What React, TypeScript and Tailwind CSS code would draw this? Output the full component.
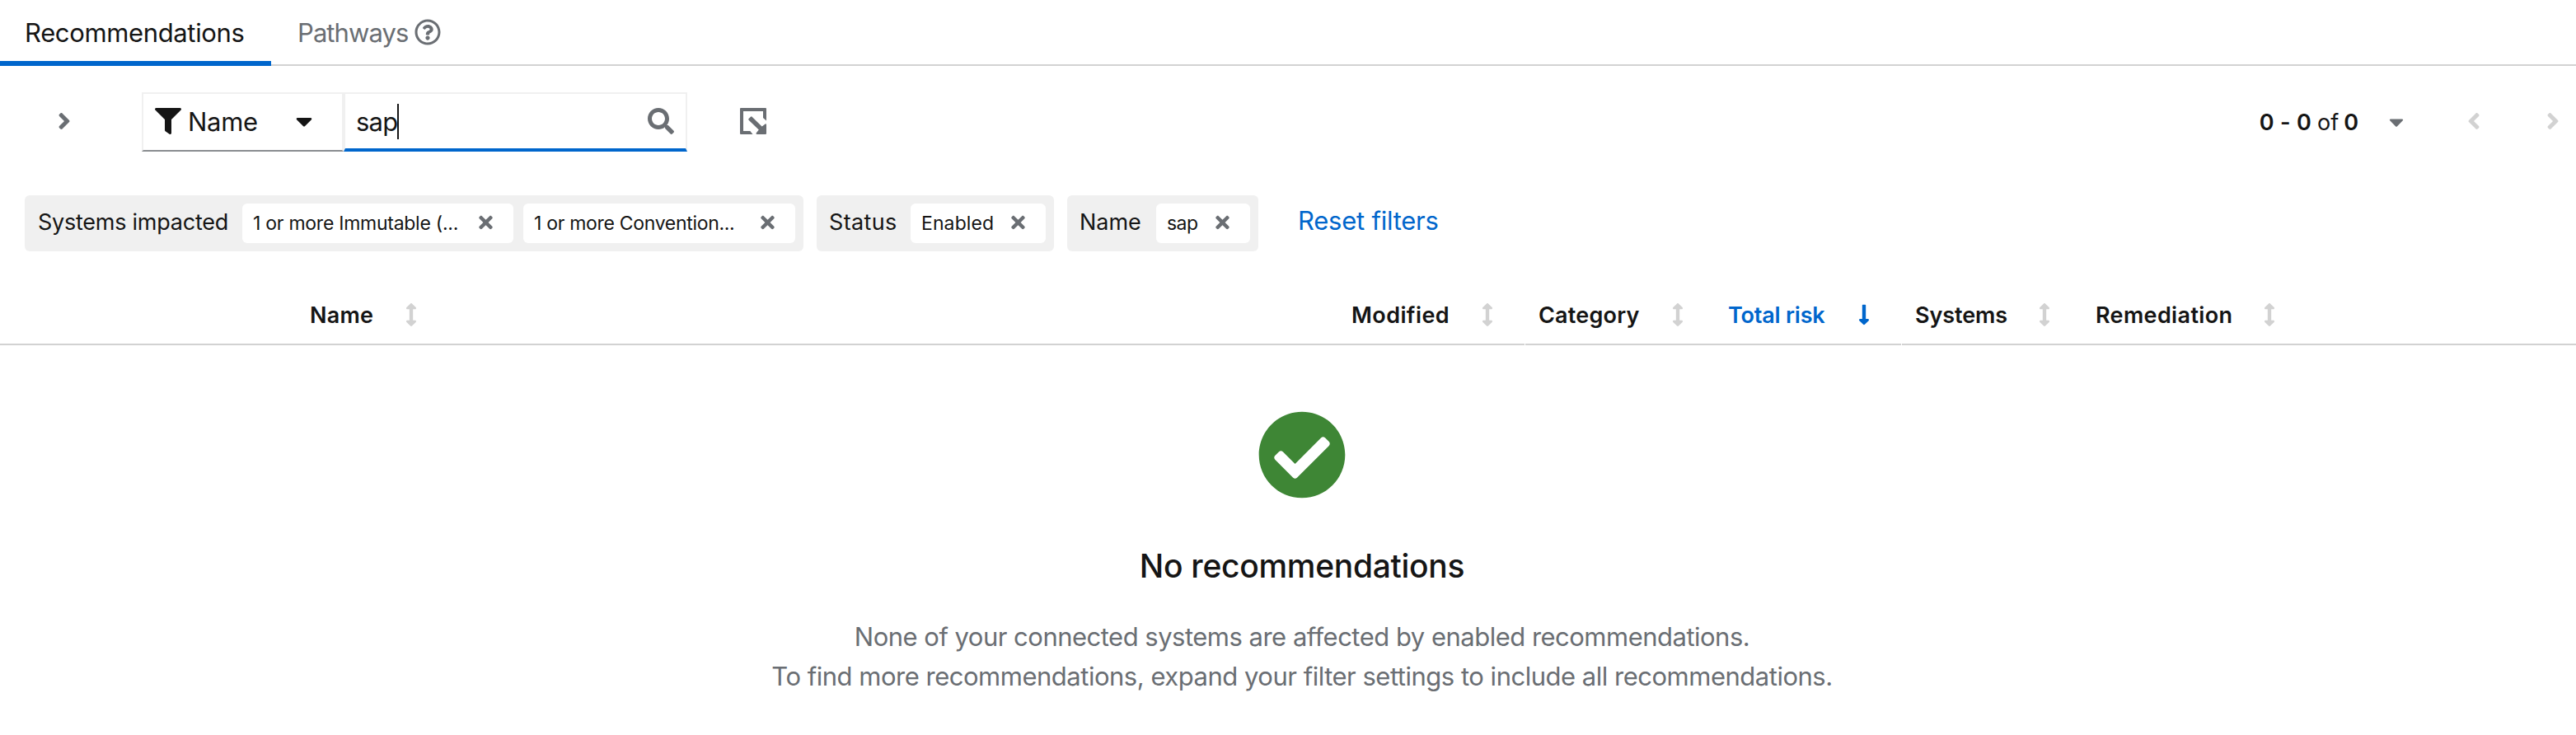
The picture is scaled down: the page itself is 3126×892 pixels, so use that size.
import type { ReactNode } from 'react';
import {
  FaAngleLeft,
  FaAngleRight,
  FaArrowsAltV,
  FaCaretDown,
  FaCheckCircle,
  FaFilter,
  FaLongArrowAltDown,
  FaRegQuestionCircle,
  FaSearch,
  FaTimes,
} from 'react-icons/fa';

function ExportIcon() {
  return (
    <svg viewBox="0 0 32 32" className="h-8 w-8" fill="#6a6e73">
      <path d="M1 0H31a1 1 0 0 1 1 1V15.5L28 12V4H4V28H12.3L15.5 32H1a1 1 0 0 1-1-1V1a1 1 0 0 1 1-1Z" />
      <path d="M10.6 13.1L13 10.7a1.2 1.2 0 0 1 1.6 0L26.6 22.6L30.6 19.4Q32 18.8 32 20.4V31a1 1 0 0 1-1 1H21Q19 32 19.6 30.5L22.8 26.6L10.6 14.7a1.1 1.1 0 0 1 0-1.6Z" />
    </svg>
  );
}

function ChipGroup({ label, className, children }: { label: ReactNode; className: string; children: ReactNode }) {
  return (
    <div className={`flex h-[68px] shrink-0 items-center rounded-[6px] bg-[#f0f0f0] ${className}`}>
      <div className="relative -top-0.5 text-[27px] leading-none">{label}</div>
      {children}
    </div>
  );
}

function Chip({ text, className }: { text: ReactNode; className: string }) {
  return (
    <div className={`flex h-12 shrink-0 items-center justify-between rounded-[6px] bg-white pl-[13px] pr-[25px] text-[23px] ${className}`}>
      {text}
      <FaTimes className="relative -top-px h-6 w-[17px] shrink-0 text-[#6a6e73]" />
    </div>
  );
}

function Column({ label, className, active }: { label: ReactNode; className: string; active?: boolean }) {
  return (
    <div
      className={`flex shrink-0 items-center justify-between border-b-2 border-[#d2d2d2] pt-0.5 ${active ? 'text-[#0066cc]' : ''} ${className}`}
    >
      {label}
      {active ? (
        <FaLongArrowAltDown className="h-7 w-3.5" />
      ) : (
        <FaArrowsAltV className="h-7 w-3.5 text-[#d2d2d2]" />
      )}
    </div>
  );
}

export default function App() {
  return (
    <div className="flex h-[892px] w-[3126px] flex-col overflow-hidden whitespace-nowrap bg-white font-['Inter',sans-serif] text-[31px] leading-none text-[#151515]">
      <nav className="flex h-20 shrink-0">
        <div className="flex w-[329px] items-center border-b-[6px] border-[#0066cc] pl-[30px] pt-1">
          <span className="tracking-[-0.36px]">Recommendations</span>
        </div>
        <div className="flex flex-1 items-center border-b-2 border-[#d2d2d2] pl-8 text-[#6a6e73]">
          <span className="w-[142px] tracking-[-0.92px]">Pathways</span>
          <FaRegQuestionCircle className="h-8 w-8" />
        </div>
      </nav>

      <div className="mt-8 flex h-[72px] shrink-0 items-center">
        <FaAngleRight className="relative -top-px ml-[70px] h-8 w-4 text-[#6a6e73]" />
        <div className="ml-[86px] flex h-full w-[245px] items-center border-2 border-b-[#8a8d90] border-[#f0f0f0] pb-0.5 pl-3.5">
          <FaFilter className="h-8 w-8" />
          <span className="ml-2 w-[131px] tracking-[-0.31px]">Name</span>
          <FaCaretDown className="h-8 w-5" />
        </div>
        <div className="flex h-full w-[417px] items-center border-2 border-b-4 border-b-[#0066cc] border-[#f0f0f0] pl-[13px]">
          <span className="tracking-[-0.8px]">sap</span>
          <span className="h-[43px] w-0.5 bg-[#151515]" />
          <FaSearch className="ml-auto mr-3.5 h-8 w-8 text-[#6a6e73]" />
        </div>
        <div className="relative -top-px ml-16">
          <ExportIcon />
        </div>
        <div className="ml-auto flex items-center text-[27px]">
          <span className="font-semibold tracking-[0.3px]">0 - 0</span>
          <span className="ml-[7px]">of</span>
          <span className="ml-[6px] font-semibold">0</span>
          <FaCaretDown className="ml-[37px] h-7 w-[18px] text-[#6a6e73]" />
          <FaAngleLeft className="relative -top-px ml-[77px] h-8 w-4 text-[#d2d2d2]" />
          <FaAngleRight className="relative -top-px ml-20 mr-5 h-8 w-4 text-[#d2d2d2]" />
        </div>
      </div>

      <div className="mt-[53px] flex h-[68px] shrink-0 items-center pl-[30px]">
        <ChipGroup className="w-[945px] pl-4" label={<div className="w-[248px] tracking-[-0.25px]">Systems impacted</div>}>
          <Chip className="w-[329px]" text={<span className="tracking-[-0.26px]">1 or more Immutable (...</span>} />
          <Chip className="ml-3 w-[330px]" text={<span className="tracking-[-0.31px]">1 or more Convention...</span>} />
        </ChipGroup>
        <ChipGroup className="ml-4 w-[288px] pl-[15px]" label={<div className="w-[99px] tracking-[0.35px]">Status</div>}>
          <Chip className="w-[164px]" text={<span className="tracking-[0.1px]">Enabled</span>} />
        </ChipGroup>
        <ChipGroup className="ml-4 w-[232px] pl-[15px]" label={<div className="w-[93px] tracking-[-0.05px]">Name</div>}>
          <Chip className="w-[114px]" text={<span className="tracking-[-0.53px]">sap</span>} />
        </ChipGroup>
        <span className="relative -top-1 ml-12 tracking-[-0.24px] text-[#0066cc]">Reset filters</span>
      </div>

      <div className="mt-10 flex h-[74px] shrink-0 text-[27px] font-semibold">
        <div className="w-[376px] border-b-2 border-[#d2d2d2]" />
        <Column className="w-[130px]" label={<span className="tracking-[0.2px]">Name</span>} />
        <div className="w-[1134px] border-b-2 border-[#d2d2d2]" />
        <Column className="w-[172px]" label={<span className="tracking-[0.4px]">Modified</span>} />
        <div className="w-[38px] border-b-2 border-[#d2d2d2]" />
        <div className="ml-px w-[16px] border-b-2 border-[#d2d2d2]" />
        <Column className="w-[176px]" label={<span className="tracking-[0.2px]">Category</span>} />
        <div className="w-[54px] border-b-2 border-[#d2d2d2]" />
        <Column active className="w-[172px]" label={<span className="tracking-[-0.2px]">Total risk</span>} />
        <div className="w-[38px] border-b-2 border-[#d2d2d2]" />
        <div className="ml-px w-[16px] border-b-2 border-[#d2d2d2]" />
        <Column className="w-[164px]" label={<span className="tracking-[-0.1px]">Systems</span>} />
        <div className="w-[55px] border-b-2 border-[#d2d2d2]" />
        <Column className="w-[218px]" label={<span className="tracking-[0.35px]">Remediation</span>} />
        <div className="flex-1 border-b-2 border-[#d2d2d2]" />
      </div>

      <main className="flex flex-1 flex-col items-center pl-[34px] pt-[79px]">
        <FaCheckCircle className="h-[108px] w-[108px] shrink-0 text-[#3e8635]" />
        <h1 className="mt-[57px] text-[39px] font-medium leading-[48px] tracking-[-0.3px]">No recommendations</h1>
        <div className="mt-[38px] flex flex-col items-center leading-[48px] text-[#6a6e73]">
          <p className="tracking-[-0.51px]">None of your connected systems are affected by enabled recommendations.</p>
          <p className="tracking-[-0.49px]">To find more recommendations, expand your filter settings to include all recommendations.</p>
        </div>
      </main>
    </div>
  );
}
